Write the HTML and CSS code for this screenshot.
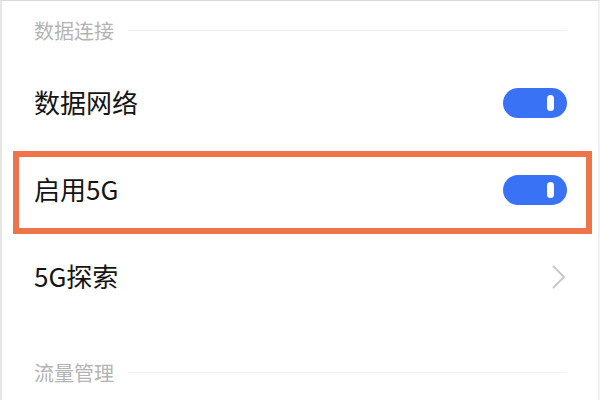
FILE: index.html
```html
<!DOCTYPE html>
<html lang="zh-CN">
<head>
<meta charset="utf-8">
<link rel="stylesheet" href="styles.css">
</head>
<body>
<div class="frame">
  <div class="section-head"><span class="section-title">数据连接</span><span class="rule"></span></div>
  <div class="row">
    <span class="label">数据网络</span>
    <span class="switch"><span class="knob"></span></span>
  </div>
  <div class="row highlighted">
    <span class="label">启用5G</span>
    <span class="switch"><span class="knob"></span></span>
  </div>
  <div class="row">
    <span class="label">5G探索</span>
    <svg class="chevron" width="14" height="24" viewBox="0 0 14 24"><polyline points="1.5,1.5 12,12 1.5,22.5" fill="none" stroke="#c9c9c9" stroke-width="2" stroke-linecap="round" stroke-linejoin="round"/></svg>
  </div>
  <div class="section-head second"><span class="section-title">流量管理</span><span class="rule"></span></div>
</div>
</body>
</html>
```
FILE: styles.css
```css
html, body {
  margin: 0;
  padding: 0;
  background: #ffffff;
}
.frame {
  box-sizing: border-box;
  width: 600px;
  height: 400px;
  overflow: hidden;
  border-top: 1px solid #dadada;
  border-left: 2px solid #e6e6e6;
  border-right: 2px solid #f2f2f2;
  padding: 0 31px 0 32px;
  font-family: "Noto Sans CJK SC", "Noto Sans", sans-serif;
  background: #fff;
}
.section-head {
  height: 58px;
  display: flex;
  align-items: center;
  gap: 14px;
}
.section-head.second {
  margin-top: 23px;
}
.section-title {
  font-size: 20px;
  color: #b4b4b4;
  line-height: 1;
  padding-top: 2px;
}
.rule {
  flex: 1;
  height: 1px;
  background: #f1f1f1;
}
.row {
  height: 87px;
  display: flex;
  align-items: center;
  justify-content: space-between;
  position: relative;
}
.label {
  font-size: 26px;
  color: #141414;
  line-height: 1;
  padding-bottom: 2px;
}
.switch {
  width: 64px;
  height: 30px;
  border-radius: 15px;
  background: #3a72f5;
  display: flex;
  align-items: center;
  justify-content: flex-end;
  padding-right: 13px;
  box-sizing: border-box;
}
.knob {
  width: 7px;
  height: 16px;
  border-radius: 4px;
  background: #ffffff;
}
.chevron {
  margin-right: 1px;
}
.highlighted::after {
  content: "";
  position: absolute;
  left: -21px;
  right: -25px;
  top: 5px;
  bottom: -1px;
  border: 6px solid #f0744a;
  pointer-events: none;
}
```
